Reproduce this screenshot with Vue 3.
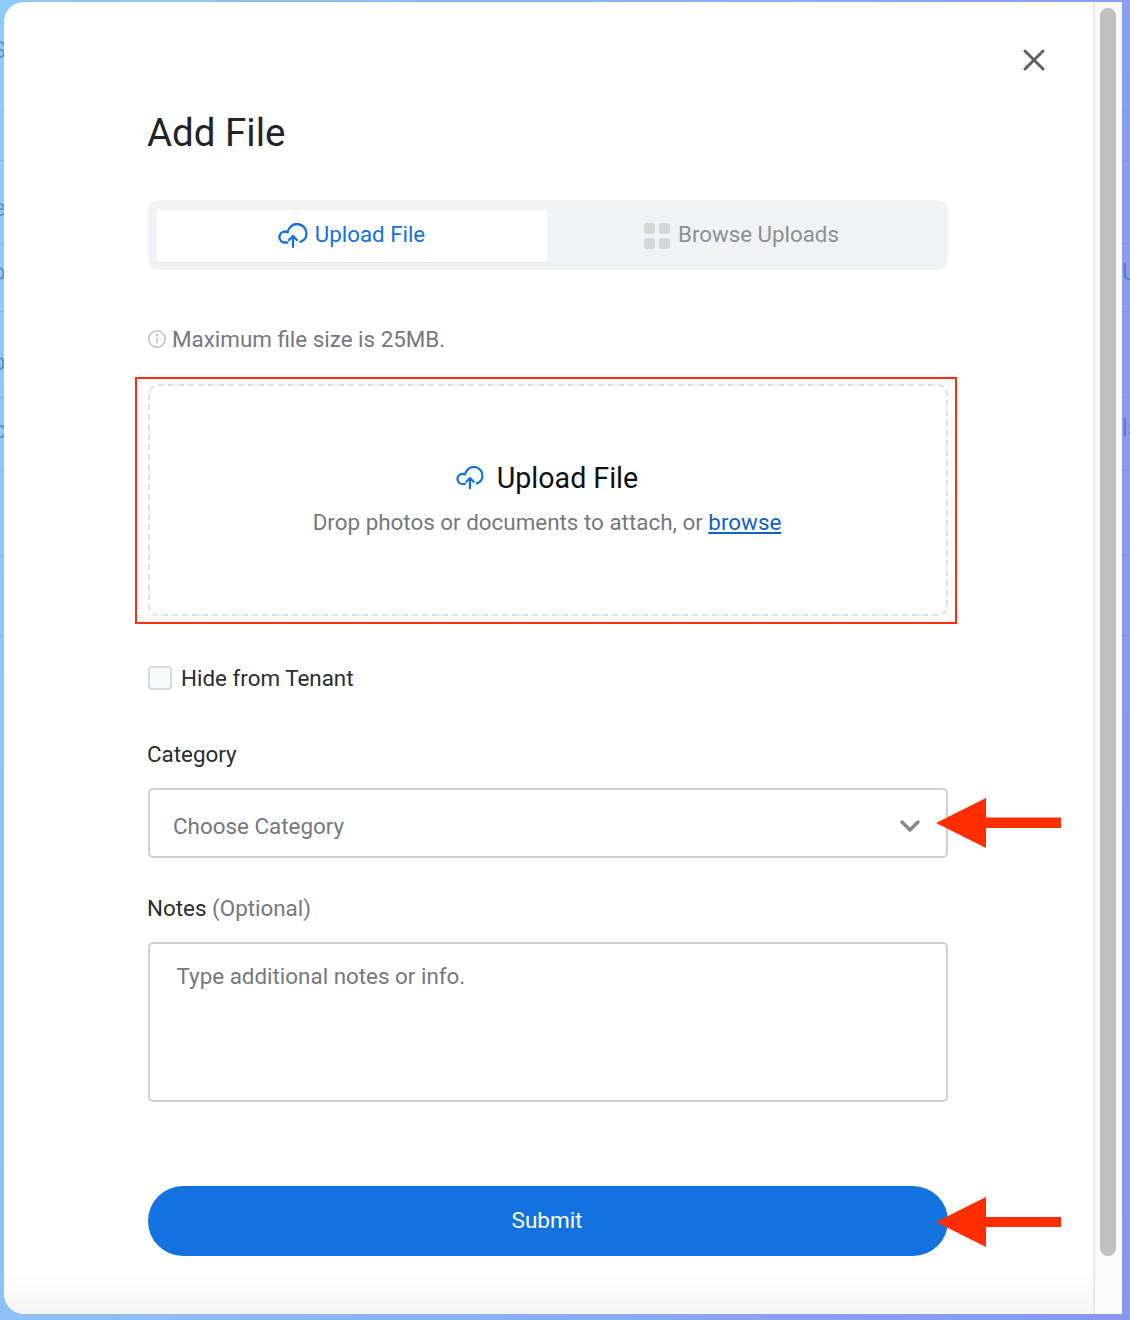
<script setup>
const rules = [110, 160, 243, 311, 397, 470, 555, 635]
const scraps = [
  { text: 'S', x: -8, y: 36 },
  { text: 'e', x: -7, y: 194 },
  { text: 'o', x: -8, y: 258 },
  { text: 'o', x: -8, y: 348 },
  { text: 'c', x: -6, y: 416 },
  { text: 'U', x: 1122, y: 258 },
  { text: 'ls', x: 1122, y: 414 }
]
</script>

<template>
  <div class="page">
    <div class="backdrop" aria-hidden="true">
      <i v-for="r in rules" :key="r" class="rule" :style="{ top: r + 'px' }"></i>
      <span v-for="s in scraps" :key="s.y" class="scrap" :style="{ left: s.x + 'px', top: s.y + 'px' }">{{ s.text }}</span>
    </div>

    <div class="modal">
      <main class="content">
        <button class="close" aria-label="Close">
          <svg width="22" height="22" viewBox="0 0 22 22" fill="none" stroke="#5f6165" stroke-width="3" stroke-linecap="round">
            <path d="M2 2 20 20M20 2 2 20" />
          </svg>
        </button>

        <h1 class="title">Add File</h1>

        <div class="tabs">
          <div class="tab active">
            <svg width="30" height="26" viewBox="0 0 30 26" fill="none" stroke="#1172e0" stroke-width="2.300" stroke-linecap="round" stroke-linejoin="round">
              <path d="M9.500 19.500H7A5.500 5.500 0 1 1 9.600 9.200C10.500 4.500 14.500 1 19 1C24.500 1 28.500 5.500 28.500 10.500C28.500 14.500 26 17.500 22.500 18.800" />
              <path d="M15 24V13M11 17l4-4 4 4" />
            </svg>
            <span>Upload File</span>
          </div>
          <div class="tab">
            <span class="grid-icon"><i></i><i></i><i></i><i></i></span>
            <span>Browse Uploads</span>
          </div>
        </div>

        <p class="hint">
          <svg width="18" height="18" viewBox="0 0 18 18" fill="none" stroke="#bcbec2" stroke-width="1.400">
            <circle cx="9" cy="9" r="8.200" />
            <path d="M9 8v5.500" stroke-width="1.500" />
            <circle cx="9" cy="5.200" r=".5" fill="#bcbec2" />
          </svg>
          <span>Maximum file size is 25MB.</span>
        </p>

        <div class="drop-wrap">
          <div class="highlight"></div>
          <div class="drop">
            <div class="drop-title">
              <svg width="28" height="24" viewBox="0 0 30 26" fill="none" stroke="#1172e0" stroke-width="2.400" stroke-linecap="round" stroke-linejoin="round">
                <path d="M9.500 19.500H7A5.500 5.500 0 1 1 9.600 9.200C10.500 4.500 14.500 1 19 1C24.500 1 28.500 5.500 28.500 10.500C28.500 14.500 26 17.500 22.500 18.800" />
                <path d="M15 24V13M11 17l4-4 4 4" />
              </svg>
              <span>Upload File</span>
            </div>
            <p class="drop-sub">Drop photos or documents to attach, or <a href="#">browse</a></p>
          </div>
        </div>

        <label class="check">
          <span class="box"></span>
          <span>Hide from Tenant</span>
        </label>

        <div class="label label-category">Category</div>
        <div class="select-wrap">
          <div class="select">
            <span>Choose Category</span>
            <svg width="20" height="12" viewBox="0 0 20 12" fill="none" stroke="#85878b" stroke-width="3.400" stroke-linecap="round" stroke-linejoin="round">
              <path d="M2 2 10 10 18 2" />
            </svg>
          </div>
          <svg class="arrow arrow-select" width="126" height="50" viewBox="0 0 126 50">
            <path d="M0 25 50 0V19.500H125V30H50V50Z" fill="#ff2d00" />
          </svg>
        </div>

        <div class="label label-notes">Notes <span class="optional">(Optional)</span></div>
        <div class="textarea">Type additional notes or info.</div>

        <div class="submit-wrap">
          <button class="submit">Submit</button>
          <svg class="arrow arrow-submit" width="126" height="50" viewBox="0 0 126 50">
            <path d="M0 25 50 0V20H125V30H50V50Z" fill="#ff2d00" />
          </svg>
        </div>
      </main>

      <aside class="scrollbar"><div class="thumb"></div></aside>
    </div>
  </div>
</template>

<style>
html, body { margin: 0; padding: 0; }
</style>

<style scoped>
.page {
  position: relative;
  width: 1130px;
  height: 1320px;
  box-sizing: border-box;
  padding: 2px 8px 6px 4px;
  overflow: hidden;
  background: linear-gradient(100deg, #8ecbf8 0%, #8a9ff2 80%, #8795ef 100%);
  font-family: Roboto, "Liberation Sans", sans-serif;
}
.backdrop { position: absolute; inset: 0; overflow: hidden; }
.rule { position: absolute; left: 0; right: 0; height: 1px; background: rgba(70, 100, 170, .14); }
.scrap { position: absolute; font-size: 24px; line-height: 28px; color: rgba(60, 85, 150, .5); filter: blur(.6px); }

.modal {
  position: relative;
  display: flex;
  height: 100%;
  border-radius: 20px 0 0 20px;
  overflow: hidden;
  background: linear-gradient(#fff 0, #fff 1270px, #f5f5f5 100%);
}
.content {
  position: relative;
  flex: 1;
  min-width: 0;
  box-sizing: border-box;
  padding: 108px 145px 0 144px;
}
.close {
  position: absolute;
  top: 47px;
  right: 48px;
  width: 22px;
  height: 22px;
  padding: 0;
  border: 0;
  background: none;
  display: flex;
}
.title {
  margin: 0 0 0 -1px;
  font-size: 38.500px;
  line-height: 46px;
  font-weight: 400;
  color: #212326;
}
.tabs {
  display: flex;
  height: 70px;
  box-sizing: border-box;
  margin-top: 44px;
  padding: 10px 8px 8px;
  border-radius: 10px;
  background: #f1f2f6;
}
.tab {
  flex: 1;
  display: flex;
  align-items: center;
  justify-content: center;
  gap: 8px;
  padding-right: 5px;
  font-size: 22.300px;
  color: #8d8f94;
  border-radius: 4px;
}
.tab.active {
  flex: 0 0 392px;
  box-sizing: border-box;
  gap: 7px;
  padding-right: 1px;
  background: #fff;
  color: #1172e0;
  box-shadow: 0 1px 2px rgba(0, 0, 0, .06);
}
.tab > span:last-child { position: relative; top: -2px; }
.grid-icon {
  display: grid;
  grid-template-columns: repeat(2, 11px);
  grid-auto-rows: 11px;
  gap: 4px;
}
.grid-icon i { border-radius: 3px; background: #d4d6da; }
.hint {
  display: flex;
  align-items: center;
  gap: 6px;
  margin: 55px 0 0;
  font-size: 22.400px;
  line-height: 28px;
  color: #76787d;
}
.drop-wrap { position: relative; margin-top: 31px; }
.highlight {
  position: absolute;
  inset: -7px -9px -8px -13px;
  border: 2px solid #ff2d0e;
  pointer-events: none;
}
.drop {
  height: 232px;
  box-sizing: border-box;
  border: 2px dashed #dfe0e5;
  border-radius: 10px;
  display: flex;
  flex-direction: column;
  align-items: center;
  padding: 74px 2px 0 0;
}
.drop-title {
  display: flex;
  align-items: center;
  gap: 13px;
  font-size: 28.600px;
  line-height: 36px;
  color: #0f1012;
}
.drop-sub {
  margin: 12px 0 0;
  font-size: 22.400px;
  line-height: 28px;
  color: #76787d;
}
.drop-sub a { color: #0f62c8; text-decoration: underline; }
.check {
  display: flex;
  align-items: center;
  gap: 9px;
  margin-top: 48px;
  font-size: 22.400px;
  line-height: 28px;
  color: #2a2c30;
}
.box {
  width: 20px;
  height: 20px;
  border: 2px solid #d8d9de;
  border-radius: 4px;
  background: #f8f9fd;
}
.label {
  margin-left: -1px;
  font-size: 22.400px;
  line-height: 28px;
  color: #2a2c30;
}
.label-category { margin-top: 48px; }
.optional { color: #76787d; }
.select-wrap { position: relative; margin-top: 20px; }
.select {
  height: 70px;
  box-sizing: border-box;
  display: flex;
  align-items: center;
  justify-content: space-between;
  padding: 5px 26px 0 23px;
  border: 2px solid #cfd0d5;
  border-radius: 5px;
  background: #fff;
  font-size: 22.400px;
  color: #76787d;
}
.arrow { position: absolute; left: 788px; }
.arrow-select { top: 10px; }
.arrow-submit { top: 11px; }
.label-notes { margin-top: 36px; }
.textarea {
  height: 160px;
  box-sizing: border-box;
  margin-top: 20px;
  padding: 18px 26.500px;
  border: 2px solid #cfd0d5;
  border-radius: 5px;
  background: #fff;
  font-size: 22.400px;
  line-height: 28px;
  color: #76787d;
}
.submit-wrap { position: relative; margin-top: 84px; }
.submit {
  display: block;
  width: 100%;
  height: 70px;
  padding: 0 2px 2px 0;
  border: 0;
  border-radius: 35px;
  background: #1172e0;
  color: #fff;
  font: 400 22.500px Roboto, "Liberation Sans", sans-serif;
}
.scrollbar {
  flex: 0 0 29px;
  box-sizing: border-box;
  padding: 6px 6px 0 5px;
  background: #fafafa;
  border-left: 2px solid #e9e9e9;
}
.thumb {
  width: 16px;
  height: 1248px;
  border-radius: 8px;
  background: #c1c1c1;
}
</style>
